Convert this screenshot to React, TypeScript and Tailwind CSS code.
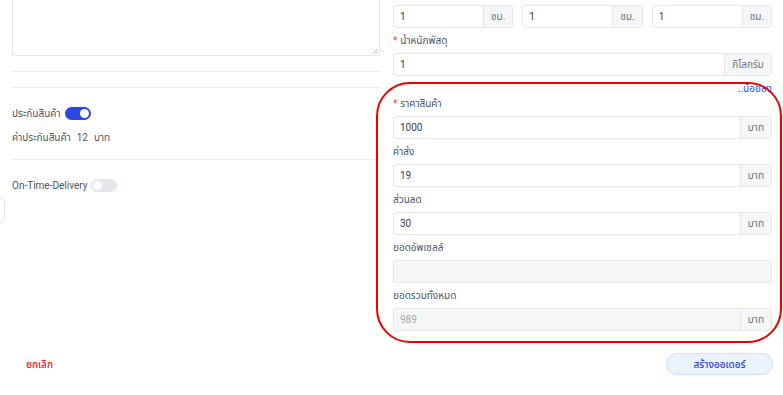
import React from "react";

function Toggle({ on }: { on: boolean }) {
  return (
    <div
      className={`w-[26px] h-[13px] rounded-full flex items-center px-[2px] ${
        on ? "bg-[#2b47e6] justify-end" : "bg-[#e3e6ea] justify-start"
      }`}
    >
      <div className="w-[9px] h-[9px] rounded-full bg-white" />
    </div>
  );
}

function Label({ text, required }: { text: string; required?: boolean }) {
  return (
    <div className="h-[16px] leading-[16px] text-[10px] text-[#4b5563] mb-[4px]">
      {required && <span className="text-[#ef4444] mr-[3px]">*</span>}
      {text}
    </div>
  );
}

function Field({
  value,
  addon,
  disabled,
}: {
  value: string;
  addon?: string;
  disabled?: boolean;
}) {
  return (
    <div
      className={`h-[23px] flex border border-[#e4e7eb] rounded-[3px] overflow-hidden ${
        disabled ? "bg-[#f5f6f8]" : "bg-white"
      }`}
    >
      <div
        className={`flex-1 flex items-center pl-[6px] text-[10px] ${
          disabled ? "text-[#a3a8b0]" : "text-[#374151]"
        }`}
      >
        {value}
      </div>
      {addon && (
        <div className="flex items-center justify-center px-[7px] bg-[#f5f6f8] border-l border-[#e4e7eb] text-[10px] text-[#6b7280]">
          {addon}
        </div>
      )}
    </div>
  );
}

export default function App() {
  return (
    <div
      className="relative w-[783px] h-[395px] overflow-hidden bg-white"
      style={{ fontFamily: 'Roboto, "Noto Sans Thai", "Noto Sans", sans-serif' }}
    >
      <div className="flex pl-[12px] pr-[11px]">
        {/* left column */}
        <div className="w-[368px] flex flex-col">
          <div className="-mt-[12px] h-[68px] border border-[#e4e7eb] rounded-[3px] relative">
            <svg
              className="absolute right-[1px] bottom-[1px]"
              width="6"
              height="6"
              viewBox="0 0 6 6"
            >
              <path d="M1 5.5 L5.5 1 M3.5 5.5 L5.5 3.5" stroke="#9ca3af" strokeWidth="0.8" />
            </svg>
          </div>
          <div className="mt-[15px] border-t border-[#eceef1]" />
          <div className="mt-[15px] border-t border-[#eceef1]" />
          <div className="mt-[18px] flex items-center gap-[4px] h-[14px]">
            <span className="text-[10px] text-[#4b5563]">ประกันสินค้า</span>
            <Toggle on />
          </div>
          <div className="mt-[10px] h-[14px] flex items-center text-[10px] text-[#4b5563]">
            ค่าประกันสินค้า <span className="ml-[6px]">12</span>
            <span className="ml-[6px]">บาท</span>
          </div>
          <div className="mt-[15px] border-t border-[#eceef1]" />
          <div className="mt-[18px] flex items-center gap-[4px] h-[14px]">
            <span className="text-[10px] text-[#4b5563]">On-Time-Delivery</span>
            <Toggle on={false} />
          </div>
        </div>

        {/* right column */}
        <div className="ml-[13px] flex-1 flex flex-col pt-[5px]">
          <div className="grid grid-cols-3 gap-[9px]">
            <Field value="1" addon="ชม." />
            <Field value="1" addon="ชม." />
            <Field value="1" addon="ชม." />
          </div>
          <div className="mt-[5px]">
            <Label text="น้ำหนักพัสดุ" required />
            <Field value="1" addon="กิโลกรัม" />
          </div>
          <div className="mt-[6px] h-[14px] leading-[14px] text-right text-[10px] text-[#2b47e6]">
            ..น้อยลง
          </div>
          <div>
            <Label text="ราคาสินค้า" required />
            <Field value="1000" addon="บาท" />
          </div>
          <div className="mt-[5px]">
            <Label text="ค่าส่ง" />
            <Field value="19" addon="บาท" />
          </div>
          <div className="mt-[5px]">
            <Label text="ส่วนลด" />
            <Field value="30" addon="บาท" />
          </div>
          <div className="mt-[5px]">
            <Label text="ยอดอัพเซลล์" />
            <Field value="" disabled />
          </div>
          <div className="mt-[5px]">
            <Label text="ยอดรวมทั้งหมด" />
            <Field value="989" addon="บาท" disabled />
          </div>
        </div>
      </div>

      {/* footer */}
      <div className="flex items-center justify-between pl-[26px] pr-[10px] mt-[22px]">
        <span className="text-[10px] text-[#ef2020] font-medium">ยกเลิก</span>
        <button className="w-[107px] h-[22px] rounded-full bg-[#eaf3fe] border border-[#cfe0f8] text-[10px] text-[#2b47e6] font-medium">
          สร้างออเดอร์
        </button>
      </div>

      {/* partial element at left edge */}
      <div className="absolute left-[-20px] top-[197px] w-[25px] h-[27px] border border-[#e4e7eb] rounded-[6px]" />

      {/* red annotation */}
      <div className="absolute left-[376px] top-[82px] w-[406px] h-[261px] border-2 border-[#ee0000] rounded-[34px] pointer-events-none" />
    </div>
  );
}
